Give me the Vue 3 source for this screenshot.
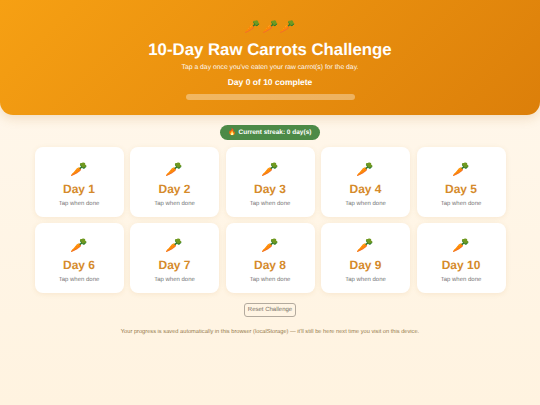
<script setup>
const days = Array.from({ length: 10 }, (_, i) => i + 1)
</script>

<template>
  <div class="page">
    <header class="hero">
      <div class="carrots">
        <span v-for="n in 3" :key="n" class="hero-carrot">🥕</span>
      </div>
      <h1>10-Day Raw Carrots Challenge</h1>
      <p class="sub">Tap a day once you've eaten your raw carrot(s) for the day.</p>
      <p class="progress-label">Day 0 of 10 complete</p>
      <div class="bar"></div>
    </header>
    <div class="streak-row"><span class="streak">🔥 Current streak: 0 day(s)</span></div>
    <main class="grid">
      <button v-for="d in days" :key="d" class="card">
        <span class="emoji">🥕</span>
        <span class="day">Day {{ d }}</span>
        <span class="tap">Tap when done</span>
      </button>
    </main>
    <div class="reset-row"><button class="reset">Reset Challenge</button></div>
    <p class="note">Your progress is saved automatically in this browser (localStorage) — it'll still be here next time you visit on this device.</p>
  </div>
</template>

<style>
html, body { margin: 0; background: #fff3e0; }
</style>
<style scoped>
.page { width: 540px; height: 405px; overflow: hidden; background: linear-gradient(180deg, #fff8ee, #fff3e0); font-family: "Liberation Sans", Arial, sans-serif; text-rendering: geometricPrecision; }
.hero { box-sizing: border-box; height: 115px; padding-top: 19px; background: linear-gradient(135deg, #f6a013, #dc7f0a); border-radius: 0 0 13px 13px; box-shadow: 0 3px 12px rgba(180,110,20,.2); color: #fff; text-align: center; display: flex; flex-direction: column; align-items: center; }
.carrots { display: flex; justify-content: center; height: 16px; }
.hero-carrot { width: 17.5px; font-size: 13px; line-height: 16px; text-align: center; }
h1 { margin: 4px 0 0; font-size: 16.8px; line-height: 22px; font-weight: 700; }
.sub { margin: 2px 0 0; font-size: 6.8px; line-height: 10px; opacity: .95; }
.progress-label { margin: 3px 0 0; font-size: 8.5px; line-height: 12px; font-weight: 700; }
.bar { width: 169px; height: 6px; margin-top: 6px; border-radius: 3px; background: rgba(255,255,255,.35); }
.streak-row { display: flex; justify-content: center; margin-top: 10px; }
.streak { box-sizing: border-box; width: 100px; text-align: center; background: #4c8a47; color: #fff; font-size: 6.5px; font-weight: 700; line-height: 15px; border-radius: 8px; white-space: nowrap; }
.grid { display: grid; grid-template-columns: repeat(5, 89px); column-gap: 6.5px; row-gap: 6px; justify-content: center; margin-top: 7px; }
.card { box-sizing: border-box; height: 70px; border: 0; background: #fff; border-radius: 8px; box-shadow: 0 1px 5px rgba(190,130,50,.12); display: flex; flex-direction: column; align-items: center; padding: 12px 0 0; font-family: inherit; text-rendering: inherit; }
.emoji { font-size: 14px; line-height: 21px; }
.day { margin-top: 1px; font-size: 12px; line-height: 16px; font-weight: 700; color: #d58a2b; }
.tap { margin-top: 3px; font-size: 6px; line-height: 9px; color: #777; }
.reset-row { display: flex; justify-content: center; margin-top: 10px; }
.reset { box-sizing: border-box; width: 52px; height: 14px; padding: 0; border: 1px solid #b3aa9e; border-radius: 3px; background: transparent; font-family: inherit; text-rendering: inherit; font-size: 6px; color: #7a7268; white-space: nowrap; }
.note { margin: 11px 0 0; text-align: center; font-size: 5.7px; line-height: 8px; color: #957a4c; }
</style>
